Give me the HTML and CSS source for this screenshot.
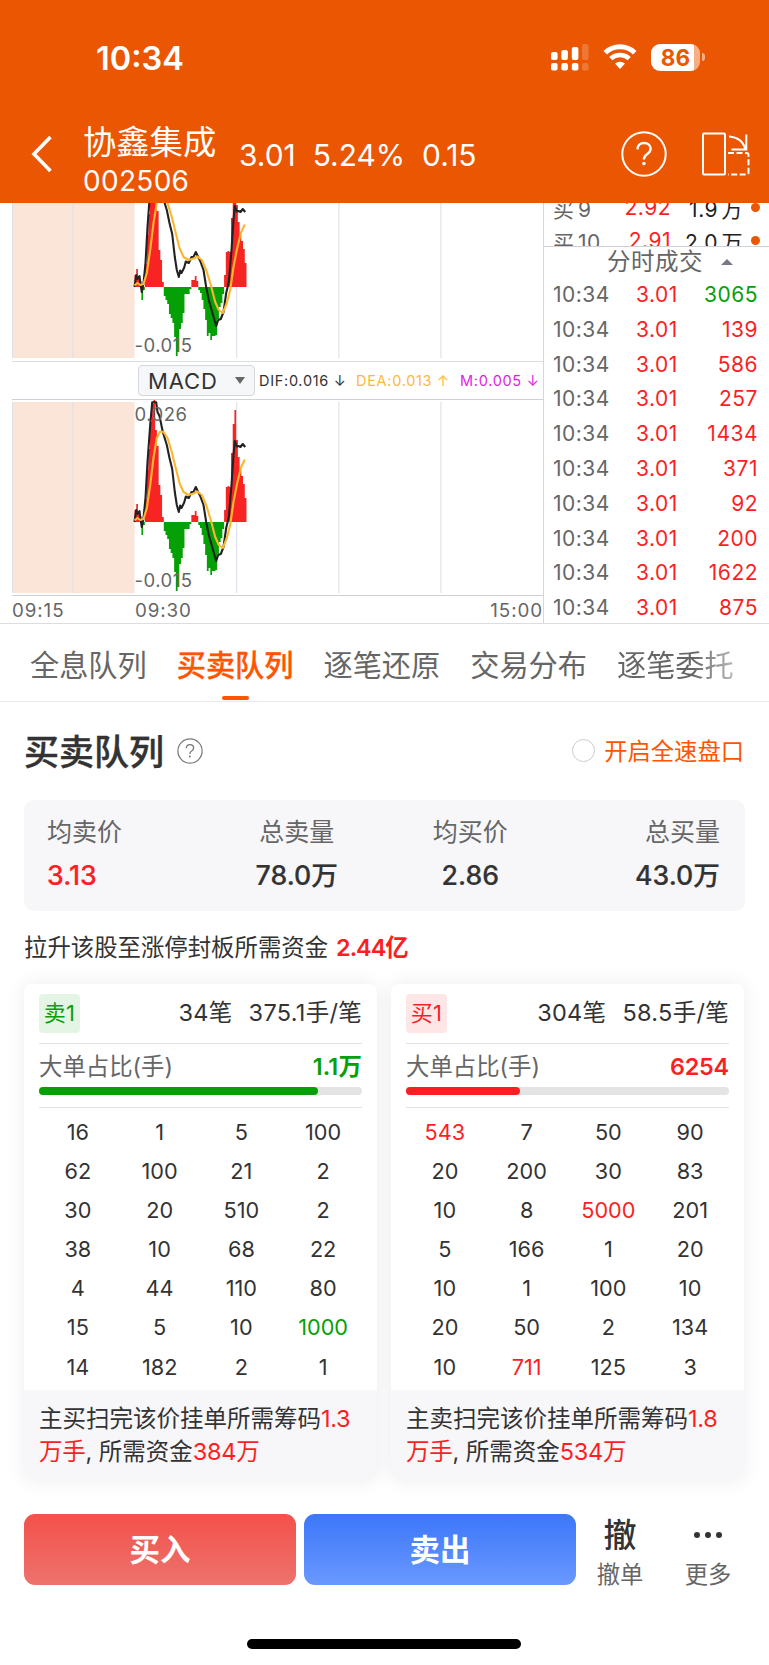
FILE: index.html
```
<!DOCTYPE html>
<html lang="zh-CN">
<head>
    <meta charset="UTF-8">
    <meta name="viewport" content="width=device-width, initial-scale=1.0">
    <title>协鑫集成 002506</title>
    <link rel="stylesheet" href="styles.css">
</head>
<body>
    <header class="header">
        <div class="status-bar">
            <span class="clock">10:34</span>
            <svg class="signal" width="39" height="28" viewBox="0 0 39 28" fill="#fff">
                <rect x="1" y="9" width="6.6" height="8" rx="2"/>
                <rect x="11.3" y="7" width="6.6" height="10" rx="2"/>
                <rect x="21.8" y="4" width="6.6" height="13" rx="2"/>
                <rect x="32" y="1" width="6.6" height="16" rx="2" opacity=".2"/>
                <rect x="1" y="20" width="6.6" height="7.6" rx="2"/>
                <rect x="11.3" y="20" width="6.6" height="7.6" rx="2"/>
                <rect x="21.8" y="20" width="6.6" height="7.6" rx="2"/>
                <rect x="32" y="20" width="6.6" height="7.6" rx="2" opacity=".2"/>
            </svg>
            <svg class="wifi" width="34" height="26" viewBox="0 0 34 26">
                <path d="M2.2 8.7a21.5 21.5 0 0 1 29.6 0" fill="none" stroke="#fff" stroke-width="5"/>
                <path d="M7.8 14.6a13.6 13.6 0 0 1 18.4 0" fill="none" stroke="#fff" stroke-width="4.6"/>
                <path d="M12 19.6a7.4 7.4 0 0 1 10 0L17 25z" fill="#fff"/>
            </svg>
            <div class="battery"><span>86</span></div>
            <i class="battery-tip"></i>
        </div>
        <div class="nav">
            <svg class="back" width="22" height="38" viewBox="0 0 22 38">
                <path d="M19.5 2 3 19l16.5 17" fill="none" stroke="#fff" stroke-width="3.6"/>
            </svg>
            <div class="stock">
                <div class="stock-name">协鑫集成</div>
                <div class="stock-code">002506</div>
            </div>
            <div class="quote">
                <span>3.01</span><span>5.24%</span><span>0.15</span>
            </div>
            <svg class="help" width="46" height="46" viewBox="0 0 46 46" fill="none" stroke="#fff">
                <circle cx="23" cy="23" r="21.7" stroke-width="2"/>
                <path d="M16.4 18.4c.1-4 2.8-6.4 6.7-6.4 3.8 0 6.5 2.4 6.5 5.7 0 2.7-1.4 4-3.6 5.5-2.3 1.5-3.1 2.6-3.1 5.2" stroke-width="2.4"/>
                <circle cx="22.9" cy="32.6" r="1.8" fill="#fff" stroke="none"/>
            </svg>
            <svg class="rotate" width="50" height="46" viewBox="0 0 50 46" fill="none" stroke="#fff" stroke-width="2">
                <rect x="2" y="2.5" width="22" height="41" rx="1"/>
                <path d="M28 5.5c8 .5 14 4.5 16.5 12.5M45.3 3.5v15H30.5"/>
                <path d="M27 22h18.5q2 0 2 2v17.5q0 2-2 2H27" stroke-dasharray="6 2.5"/>
            </svg>
        </div>
    </header>

    <section class="market">
        <div class="charts">
            <svg class="macd macd-top" width="544" height="158" viewBox="0 1 544 158"></svg>
            <div class="indicator">
                <div class="indicator-select">MACD<i></i></div>
                <span class="dif">DIF:0.016 <b>↓</b></span>
                <span class="dea">DEA:0.013 <b>↑</b></span>
                <span class="bar-m">M:0.005 <b>↓</b></span>
            </div>
            <svg class="macd macd-bottom" width="544" height="195" viewBox="0 0 544 195"></svg>
            <div class="times">
                <span>09:15</span><span>09:30</span><span>15:00</span>
            </div>
        </div>
        <div class="ticks">
            <div class="bids">
                <div class="bid"><span>买 9</span><em>2.92</em><b>1.9 万</b><i></i></div>
                <div class="bid"><span>买 10</span><em>2.91</em><b>2.0 万</b><i></i></div>
            </div>
            <div class="ticks-title">分时成交<i></i></div>
            <div class="tick"><span>10:34</span><em>3.01</em><b class="green">3065</b></div>
            <div class="tick"><span>10:34</span><em>3.01</em><b>139</b></div>
            <div class="tick"><span>10:34</span><em>3.01</em><b>586</b></div>
            <div class="tick"><span>10:34</span><em>3.01</em><b>257</b></div>
            <div class="tick"><span>10:34</span><em>3.01</em><b>1434</b></div>
            <div class="tick"><span>10:34</span><em>3.01</em><b>371</b></div>
            <div class="tick"><span>10:34</span><em>3.01</em><b>92</b></div>
            <div class="tick"><span>10:34</span><em>3.01</em><b>200</b></div>
            <div class="tick"><span>10:34</span><em>3.01</em><b>1622</b></div>
            <div class="tick"><span>10:34</span><em>3.01</em><b>875</b></div>
        </div>
    </section>

    <nav class="tabs">
        <span>全息队列</span>
        <span class="active">买卖队列</span>
        <span>逐笔还原</span>
        <span>交易分布</span>
        <span class="fade">逐笔委托</span>
    </nav>

    <main class="queue">
        <div class="queue-head">
            <h2>买卖队列</h2>
            <svg width="26" height="26" viewBox="0 0 26 26" fill="none" stroke="#777">
                <circle cx="13" cy="13" r="12.1" stroke-width="1.2"/>
                <path d="M9.3 10.3c.1-2.2 1.6-3.6 3.7-3.6s3.6 1.3 3.6 3.2c0 1.5-.7 2.2-2 3.1-1.3.8-1.7 1.4-1.7 2.9" stroke-width="1.3"/>
                <circle cx="12.9" cy="18.6" r="1" fill="#777" stroke="none"/>
            </svg>
            <label class="fast"><i></i>开启全速盘口</label>
        </div>

        <div class="summary">
            <div><span>均卖价</span><strong class="red">3.13</strong></div>
            <div><span>总卖量</span><strong>78.0万</strong></div>
            <div><span>均买价</span><strong>2.86</strong></div>
            <div><span>总买量</span><strong>43.0万</strong></div>
        </div>

        <p class="limit-up">拉升该股至涨停封板所需资金<strong>2.44亿</strong></p>

        <div class="cards">
            <div class="card sell">
                <div class="card-top">
                    <span class="tag">卖1</span>
                    <span class="orders">34笔</span><span>375.1手/笔</span>
                </div>
                <div class="big-order">
                    <div class="big-row"><span>大单占比(手)</span><strong>1.1万</strong></div>
                    <div class="progress"><i style="width: 86.3%"></i></div>
                </div>
                <div class="lots">
                    <span>16</span><span>1</span><span>5</span><span>100</span>
                    <span>62</span><span>100</span><span>21</span><span>2</span>
                    <span>30</span><span>20</span><span>510</span><span>2</span>
                    <span>38</span><span>10</span><span>68</span><span>22</span>
                    <span>4</span><span>44</span><span>110</span><span>80</span>
                    <span>15</span><span>5</span><span>10</span><span class="green">1000</span>
                    <span>14</span><span>182</span><span>2</span><span>1</span>
                </div>
                <p class="note">主买扫完该价挂单所需筹码<em>1.3<br>万手</em>, 所需资金<em>384万</em></p>
            </div>
            <div class="card buy">
                <div class="card-top">
                    <span class="tag">买1</span>
                    <span class="orders">304笔</span><span>58.5手/笔</span>
                </div>
                <div class="big-order">
                    <div class="big-row"><span>大单占比(手)</span><strong>6254</strong></div>
                    <div class="progress"><i style="width: 35.2%"></i></div>
                </div>
                <div class="lots">
                    <span class="red">543</span><span>7</span><span>50</span><span>90</span>
                    <span>20</span><span>200</span><span>30</span><span>83</span>
                    <span>10</span><span>8</span><span class="red">5000</span><span>201</span>
                    <span>5</span><span>166</span><span>1</span><span>20</span>
                    <span>10</span><span>1</span><span>100</span><span>10</span>
                    <span>20</span><span>50</span><span>2</span><span>134</span>
                    <span>10</span><span class="red">711</span><span>125</span><span>3</span>
                </div>
                <p class="note">主卖扫完该价挂单所需筹码<em>1.8<br>万手</em>, 所需资金<em>534万</em></p>
            </div>
        </div>
    </main>

    <footer class="actions">
        <button class="btn btn-buy">买入</button>
        <button class="btn btn-sell">卖出</button>
        <div class="action"><b>撤</b><span>撤单</span></div>
        <div class="action">
            <svg width="30" height="41" viewBox="0 0 30 41" fill="#333">
                <circle cx="4" cy="21" r="3"/><circle cx="15" cy="21" r="3"/><circle cx="26" cy="21" r="3"/>
            </svg>
            <span>更多</span>
        </div>
    </footer>
    <div class="home-bar"></div>

    <script>
        // one bar per minute, pixels above / below the zero line
        const bars = [12, 18, 11, 6, -13, -3, 23, 52, 73, 100, 118, 122, 92, 76, 37, 27, 5,
            -9, -13, -17, -27, -31, -36, -50, -69, -65, -42, -36, -26, -7, -7, -7, -2,
            7, 7, 11, 6, -3, -6, -13, -22, -33, -49, -46, -53, -49, -49, -48, -32, -20, -16, -7,
            12, 35, 36, 35, 69, 98, 112, 82, 65, 52, 46, 38, 24];

        const dif = [[0, 0], [1.7, 12], [3, 8], [5, 11], [5.7, 5], [7.3, -5], [9, 4], [11, 24], [13, 60],
            [15.7, 97], [17.7, 119.7], [21.7, 119.7], [23, 110], [25, 106], [28.3, 90], [32.3, 77], [35, 64],
            [37.7, 53], [40.3, 30], [42.3, 17], [44.3, 10], [45.7, 16.5], [47, 14], [49.7, 19.5],
            [51.3, 25.5], [54.3, 24], [57, 30], [59, 30], [61.3, 35], [63.7, 30], [65.7, 26], [69, 17],
            [71.7, 0], [74.3, -13], [77.7, -25], [81.7, -39], [83.7, -33], [86.3, -32], [89, -25], [91.7, -6],
            [94.3, 5], [97, 37], [99, 67], [100.3, 81], [102.3, 75.5], [104, 76], [106, 75], [108.3, 78], [110.7, 75]];

        const dea = [[0, 1.7], [3, 4], [5.7, 2], [9, 3], [12.3, 14], [15.7, 37], [19, 64], [22.3, 84], [25.7, 90.5],
            [29, 90], [33, 84], [37.3, 70], [41, 55], [45, 39], [49, 30], [54, 27], [59, 28.5], [63, 30.5], [67.3, 27],
            [71.7, 17], [76.3, 2], [80.7, -15], [84.3, -23], [88.3, -26], [92.3, -16], [95.7, -3],
            [99, 20], [102.3, 37], [106.3, 54], [110.3, 62.5]];

        const LEFT = 134.5;
        const STEP = 1.723;

        function line(points, zero, color) {
            const pts = points.map(p => (LEFT + p[0]) + "," + (zero - p[1])).join(" ");
            return `<polyline points="${pts}" fill="none" stroke="${color}" stroke-width="2.1" stroke-linejoin="round"/>`;
        }

        function label(text, y) {
            return `<text x="134.5" y="${y}" class="chart-label">${text}</text>`;
        }

        // all bars of one sign as a single shape, so no seams show between minutes
        function area(sign, zero, color) {
            let d = "";
            let x = LEFT;
            bars.forEach(v => {
                const y = v * sign > 0 ? zero - v : zero;
                d += `L${x} ${y}L${x + STEP} ${y}`;
                x += STEP;
            });
            return `<path d="M${LEFT} ${zero}${d}L${x} ${zero}Z" fill="${color}"/>`;
        }

        function drawChart(selector, top, bottom, zero, labels) {
            const h = bottom - top;
            let out = `<rect x="12" y="${top}" width="122.5" height="${h}" fill="#fbe5d9"/>`;
            out += `<rect x="12" y="${top}" width="1" height="${h}" fill="#dfe0e6"/>`;
            [72.3, 236, 338.3, 440.3].forEach(x => {
                out += `<rect x="${x}" y="${top}" width="1.2" height="${h}" fill="#dfe3ea"/>`;
            });
            out += area(1, zero, "#f82424") + area(-1, zero, "#05a005");
            out += line(dif, zero, "#222") + line(dea, zero, "#fdb62f") + labels;
            document.querySelector(selector).innerHTML = out;
        }

        drawChart(".macd-top", 0, 156, 85, label("-0.015", 150));
        drawChart(".macd-bottom", 2, 193, 122, label("0.026", 21) + label("-0.015", 187));
    </script>
</body>
</html>
```
FILE: styles.css
```
* {
    box-sizing: border-box;
}

body {
    margin: 0;
    width: 769px;
    height: 1665px;
    overflow: hidden;
    background: #fff;
    color: #333;
    font-family: Inter, "Noto Sans CJK SC", sans-serif;
}

em, i {
    font-style: normal;
}

.red {
    color: #fb1f24 !important;
}

.green {
    color: #05a005 !important;
}

/* header */
.header {
    height: 203px;
    background: #eb5602;
    color: #fff;
}

.status-bar {
    display: flex;
    align-items: center;
    height: 114px;
    padding-left: 96px;
}

.clock {
    width: 454px;
    padding-top: 2px;
    font-size: 32.5px;
    font-weight: 600;
}

.wifi {
    margin-left: 14px;
}

.battery {
    width: 49px;
    height: 27px;
    margin-left: 14px;
    border-radius: 9px;
    background: linear-gradient(to right, #fff 43px, #f6ae84 43px);
    color: #eb5602;
    font-size: 22.5px;
    font-weight: 700;
    line-height: 27px;
    text-align: center;
}

.battery-tip {
    width: 3px;
    height: 8px;
    margin-left: 2px;
    border-radius: 0 3px 3px 0;
    background: #f6ae84;
}

.nav {
    display: flex;
    align-items: center;
    height: 80px;
    padding-left: 31px;
}

.stock {
    width: 157px;
    margin-left: 30px;
    padding-top: 10px;
}

.stock-name {
    height: 43px;
    font-size: 33.3px;
    line-height: 42px;
    white-space: nowrap;
}

.stock-code {
    font-size: 28px;
    line-height: 34px;
    letter-spacing: 0.3px;
}

.quote {
    display: flex;
    gap: 17px;
    width: 382px;
    margin-left: -1px;
    padding-top: 1px;
    font-size: 29.9px;
}

.rotate {
    margin-left: 34px;
}

/* charts */
.market {
    display: flex;
    height: 421px;
    border-bottom: 1px solid #dcdde3;
}

.charts {
    width: 543px;
}

.macd {
    display: block;
}

.chart-label {
    font-size: 18.5px;
    letter-spacing: 0.5px;
    fill: #666;
}

.indicator {
    display: flex;
    align-items: center;
    height: 39px;
    margin-left: 12px;
    padding-left: 126px;
    border-top: 1px solid #dcdde3;
    border-bottom: 1px solid #cfd1d9;
    font-size: 14.5px;
    letter-spacing: 0.7px;
    white-space: nowrap;
}

.indicator-select {
    display: flex;
    align-items: center;
    justify-content: space-between;
    width: 117px;
    height: 31px;
    margin-right: 4px;
    padding: 0 9px;
    border: 1px solid #d5d7df;
    border-radius: 4px;
    background: #f6f7f9;
    font-size: 22px;
    letter-spacing: 0.9px;
}

.indicator-select i {
    border: 5px solid transparent;
    border-top: 7px solid #666;
    border-bottom: 0;
}

.indicator b {
    font-weight: 400;
}

.dif {
    width: 97px;
}

.dea {
    width: 104px;
    color: #fdb844;
}

.bar-m {
    color: #e01fe0;
}

.times {
    display: flex;
    height: 27px;
    margin-left: 12px;
    border-top: 1px solid #cfd1d9;
    color: #666;
    font-size: 18.8px;
    letter-spacing: 0.9px;
    line-height: 29px;
}

.times span {
    width: 123px;
}

.times span:last-child {
    margin-left: auto;
    text-align: right;
}

.ticks {
    flex: 1;
    border-left: 1px solid #d5d7df;
    font-size: 21px;
    letter-spacing: 0.5px;
}

.ticks em {
    color: #fb1f24;
}

.ticks b {
    font-weight: 400;
}

.bids {
    display: flex;
    flex-direction: column;
    justify-content: flex-end;
    height: 44px;
    overflow: hidden;
    border-bottom: 1px solid #cfd1d9;
}

.bid {
    display: flex;
    flex-shrink: 0;
    align-items: center;
    height: 33px;
    padding-left: 9px;
    color: #666;
    white-space: nowrap;
}

.bid:last-child {
    margin-bottom: -11px;
}

.bid span {
    width: 60px;
    word-spacing: -3px;
}

.bid em {
    width: 58px;
    text-align: right;
}

.bid b {
    width: 72px;
    color: #222;
    text-align: right;
    word-spacing: -3px;
}

.bid i {
    width: 9px;
    height: 9px;
    margin-left: 8px;
    border-radius: 50%;
    background: #eb5602;
}

.ticks-title {
    display: flex;
    align-items: center;
    height: 30px;
    padding-left: 63px;
    color: #666;
    font-size: 23.5px;
    line-height: 30px;
}

.ticks-title i {
    margin-left: 18px;
    border: 6px solid transparent;
    border-top: 0;
    border-bottom: 6px solid #777985;
}

.tick {
    display: flex;
    height: 34.8px;
    padding: 0 11px 0 9px;
    color: #666;
    line-height: 35px;
}

.tick span {
    width: 83px;
}

.tick b {
    margin-left: auto;
    color: #fb1f24;
}

/* tabs */
.tabs {
    display: flex;
    gap: 30px;
    height: 78px;
    padding-left: 30px;
    border-bottom: 1px solid #e9e9ec;
    color: #666;
    font-size: 29.2px;
    line-height: 83px;
    white-space: nowrap;
}

.tabs .active {
    position: relative;
    color: #ff5500;
    font-weight: 500;
    -webkit-text-stroke: 0.3px #ff5500;
}

.tabs .active::after {
    content: "";
    position: absolute;
    left: 45px;
    bottom: 1px;
    width: 27px;
    height: 4px;
    border-radius: 2px;
    background: #ff5500;
}

.tabs .fade {
    background: linear-gradient(to right, #666 65%, #bbb);
    background-clip: text;
    -webkit-background-clip: text;
    color: transparent;
}

/* queue */
.queue {
    padding: 0 24px;
}

.queue-head {
    display: flex;
    align-items: center;
    height: 98px;
}

.queue-head h2 {
    margin: -4px 13px 0 0;
    font-size: 35px;
    font-weight: 500;
    -webkit-text-stroke: 0.4px #333;
}

.fast {
    display: flex;
    align-items: center;
    margin: -2px 1px 0 auto;
    color: #ff5500;
    font-size: 23.3px;
}

.fast i {
    width: 23px;
    height: 23px;
    margin-right: 9px;
    border: 1px solid #ccc;
    border-radius: 50%;
}

.summary {
    display: grid;
    grid-template-columns: 163px 173.5px 173.5px 163px;
    height: 111px;
    padding: 11px 24px 0 23px;
    border-radius: 10px;
    background: #f7f7fa;
    text-align: center;
}

.summary div:first-child {
    text-align: left;
}

.summary div:last-child {
    text-align: right;
}

.summary span {
    display: block;
    color: #666;
    font-size: 25px;
    line-height: 43px;
}

.summary strong {
    display: block;
    font-size: 26.7px;
    font-weight: 500;
    line-height: 43px;
    -webkit-text-stroke: 0.2px;
}

.limit-up {
    margin: 0;
    height: 73px;
    font-size: 23.4px;
    line-height: 74px;
}

.limit-up strong {
    margin-left: 8px;
    color: #fb1f24;
    font-weight: 600;
    letter-spacing: -1px;
}

.cards {
    display: flex;
    gap: 14px;
}

.card {
    width: 353px;
    height: 496px;
    border-radius: 8px;
    overflow: hidden;
    background: #fff;
    box-shadow: 0 0 20px rgba(0, 0, 0, 0.08);
}

.card-top {
    display: flex;
    align-items: center;
    height: 59px;
    margin: 0 15px;
    font-size: 23.5px;
    line-height: 28px;
    letter-spacing: 0.3px;
}

.card-top span {
    margin-bottom: 2px;
}

.card-top .tag {
    width: 41px;
    height: 39px;
    margin: 0;
    border-radius: 4px;
    font-size: 22px;
    line-height: 38px;
    text-align: center;
}

.card-top .orders {
    margin-left: auto;
    margin-right: 16px;
}

.sell .tag {
    background: #e5f5e5;
    color: #05a005;
}

.buy .tag {
    background: #fee6e7;
    color: #fb1f24;
}

.big-order {
    height: 65px;
    margin: 0 15px;
    border-top: 1.5px solid #e1e1e1;
    border-bottom: 1.5px solid #e1e1e1;
}

.big-row {
    display: flex;
    justify-content: space-between;
    height: 43px;
    color: #666;
    font-size: 23.4px;
    line-height: 46px;
}

.big-row strong {
    font-weight: 600;
    letter-spacing: -0.2px;
}

.sell strong {
    color: #05a005;
    letter-spacing: 0.2px;
}

.buy strong {
    color: #fb1f24;
}

.progress {
    height: 8px;
    border-radius: 4px;
    background: #e4e4e4;
}

.progress i {
    display: block;
    height: 8px;
    border-radius: 4px;
}

.sell .progress i {
    background: #05a005;
}

.buy .progress i {
    background: #fb1f24;
}

.lots {
    display: grid;
    grid-template-columns: repeat(4, 1fr);
    grid-auto-rows: 39.1px;
    height: 282px;
    margin: 0 13px;
    padding-top: 5px;
    font-size: 21.7px;
    line-height: 39px;
    text-align: center;
}

.note {
    height: 90px;
    margin: 0;
    padding: 12px 15px 0;
    background: #f7f7fa;
    font-size: 23.5px;
    line-height: 33px;
    white-space: nowrap;
}

.note em {
    color: #fb1f24;
    letter-spacing: -0.3px;
}

/* bottom actions */
.actions {
    display: flex;
    height: 71px;
    margin-top: 34px;
    padding-left: 24px;
}

.btn {
    width: 272px;
    height: 71px;
    margin-right: 8px;
    padding: 0 0 4px;
    border: none;
    border-radius: 11px;
    color: #fff;
    font-family: inherit;
    font-size: 30.5px;
    font-weight: 700;
}

.btn-sell {
    margin-right: 0;
}

.btn-buy {
    background: linear-gradient(#f4504a, #ed736d);
}

.btn-sell {
    background: linear-gradient(#3c77f9, #6a98ff);
}

.action {
    display: flex;
    flex-direction: column;
    align-items: center;
    width: 88px;
    color: #666;
    font-size: 23.3px;
    line-height: 39px;
}

.action b {
    height: 41px;
    color: #333;
    font-size: 33px;
    font-weight: 500;
    line-height: 42px;
}

.action svg {
    flex-shrink: 0;
}

.home-bar {
    width: 274px;
    height: 10px;
    margin: 54px 0 0 247px;
    border-radius: 5px;
    background: #000;
}
```
